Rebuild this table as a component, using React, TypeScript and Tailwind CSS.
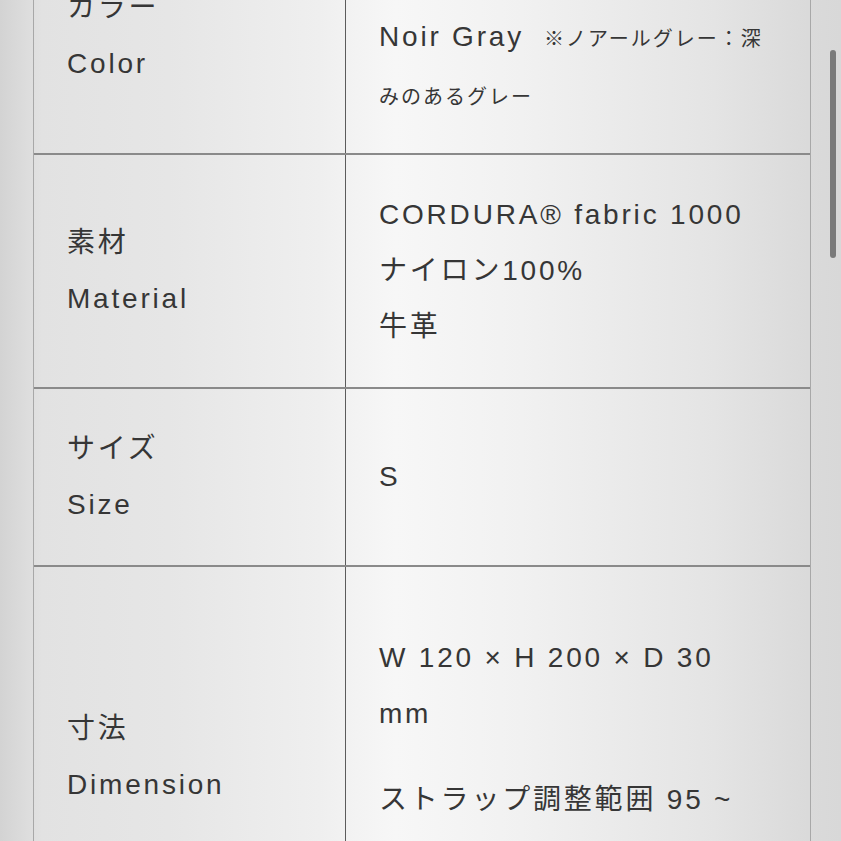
import React from 'react';

const font = "font-['Liberation_Sans','Noto_Sans_CJK_JP',sans-serif]";

function Label({ ja, en }: { ja: string; en: string }) {
  return (
    <div className="flex flex-col justify-center px-[33px] leading-[56px]">
      <span>{ja}</span>
      <span>{en}</span>
    </div>
  );
}

export default function App() {
  return (
    <div
      className={`relative h-[841px] overflow-hidden bg-[linear-gradient(to_right,#d3d3d3_0%,#e2e2e2_5%,#e6e6e6_20%,#efefef_38%,#f7f7f7_47%,#f1f1f1_62%,#e4e4e4_85%,#dadada_96%,#d8d8d8_100%)] text-[28px] tracking-[0.1em] text-[#363636] ${font}`}
    >
      <div className="ml-[33px] mt-[-81px] w-[778px] border-x border-[#a8a8a8]">
        {/* Color */}
        <div className="grid h-[236px] grid-cols-[311px_1fr] border-b-2 border-[#8a8a8a]">
          <Label ja="カラー" en="Color" />
          <div className="flex flex-col justify-end border-l border-[#5c5c5c] pb-[28px] pl-[33px] pr-[40px] leading-[56px]">
            <p>
              Noir Gray
              <span className="ml-[20px] text-[20px] tracking-[0.1em]">※ノアールグレー：深みのあるグレー</span>
            </p>
          </div>
        </div>

        {/* Material */}
        <div className="grid h-[234px] grid-cols-[311px_1fr] border-b-2 border-[#8a8a8a]">
          <Label ja="素材" en="Material" />
          <div className="flex flex-col justify-center border-l border-[#5c5c5c] pl-[33px] pr-[40px] leading-[56px]">
            <span>CORDURA® fabric 1000</span>
            <span>ナイロン100%</span>
            <span>牛革</span>
          </div>
        </div>

        {/* Size */}
        <div className="grid h-[178px] grid-cols-[311px_1fr] border-b-2 border-[#8a8a8a]">
          <Label ja="サイズ" en="Size" />
          <div className="flex flex-col justify-center border-l border-[#5c5c5c] pl-[33px] pr-[40px] leading-[56px]">
            <span>S</span>
          </div>
        </div>

        {/* Dimension */}
        <div className="grid h-[382px] grid-cols-[311px_1fr] border-b-2 border-[#8a8a8a]">
          <Label ja="寸法" en="Dimension" />
          <div className="flex flex-col border-l border-[#5c5c5c] pl-[33px] pr-[40px] pt-[63px] leading-[56px]">
            <p>W 120 × H 200 × D 30 mm</p>
            <p className="mt-[30px]">ストラップ調整範囲 95 ~ 135 cm</p>
          </div>
        </div>
      </div>

      {/* scrollbar */}
      <div className="absolute left-[830px] top-[50px] h-[208px] w-[6px] rounded-full bg-[#7a7a7a]" />
    </div>
  );
}
